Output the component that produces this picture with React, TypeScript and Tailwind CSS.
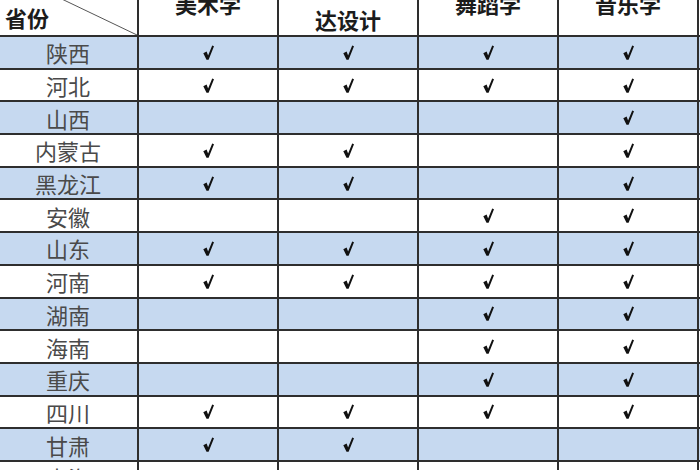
const subjects = ['美术学', '视觉传达设计', '舞蹈学', '音乐学'];

// 1 = checked, 0 = empty; columns follow subjects
const rows: [string, number[]][] = [
  ['陕西', [1, 1, 1, 1]],
  ['河北', [1, 1, 1, 1]],
  ['山西', [0, 0, 0, 1]],
  ['内蒙古', [1, 1, 0, 1]],
  ['黑龙江', [1, 1, 0, 1]],
  ['安徽', [0, 0, 1, 1]],
  ['山东', [1, 1, 1, 1]],
  ['河南', [1, 1, 1, 1]],
  ['湖南', [0, 0, 1, 1]],
  ['海南', [0, 0, 1, 1]],
  ['重庆', [0, 0, 1, 1]],
  ['四川', [1, 1, 1, 1]],
  ['甘肃', [1, 1, 0, 0]],
  ['青海', [0, 0, 0, 1]],
];

function Check() {
  return (
    <svg width="11" height="15" viewBox="0 0 11 15" className="block">
      <path d="M0.3 8.3 L3.6 6.6 L5.1 10.4 L9.2 0.4 L11 1.2 L5.6 14.7 L3.5 14.7 Z" fill="#111" />
    </svg>
  );
}

export default function App() {
  return (
    <div
      className="w-[700px] h-[470px] overflow-hidden bg-white"
      style={{ fontFamily: '"Noto Sans CJK SC", "Noto Sans", sans-serif' }}
    >
      <div className="ml-[-1px] mt-[-31px] w-[702px]">
        {/* header */}
        <div className="grid grid-cols-[140px_140px_140px_140px_140px] h-[68px] border-b-2 border-[#2e2e2e]">
          <div className="relative border-r-2 border-[#2e2e2e] flex items-end pl-[6px] pb-[7px]">
            <svg className="absolute inset-0" width="138" height="66" viewBox="0 0 138 66">
              <line x1="0" y1="0" x2="138" y2="66" stroke="#555" strokeWidth="1" />
            </svg>
            <span className="text-[22px] leading-none font-bold text-[#1c1c1c]">省份</span>
          </div>
          {subjects.map((s) => (
            <div key={s} className="flex items-center justify-center text-center border-r-2 border-[#2e2e2e]">
              {s === '视觉传达设计' ? (
                <span className="text-[22px] leading-[32px] font-bold text-[#1c1c1c] pt-[2px]">
                  视觉传
                  <br />
                  达设计
                </span>
              ) : (
                <span className="text-[22px] leading-none font-bold text-[#1c1c1c] pt-[2px]">{s}</span>
              )}
            </div>
          ))}
        </div>

        {/* body */}
        {rows.map(([name, marks], r) => (
          <div
            key={name}
            className={`grid grid-cols-[140px_140px_140px_140px_140px] h-[32.7px] border-b-2 border-[#2e2e2e] ${
              r % 2 === 0 ? 'bg-[#c6d9f0]' : 'bg-white'
            }`}
          >
            <div className="border-r-2 border-[#2e2e2e] flex items-center justify-center text-[22px] leading-none text-[#4a4a4a]">
              {name}
            </div>
            {marks.map((m, c) => (
              <div key={c} className="border-r-2 border-[#2e2e2e] flex items-center justify-center">
                {m ? <Check /> : null}
              </div>
            ))}
          </div>
        ))}
      </div>
    </div>
  );
}
